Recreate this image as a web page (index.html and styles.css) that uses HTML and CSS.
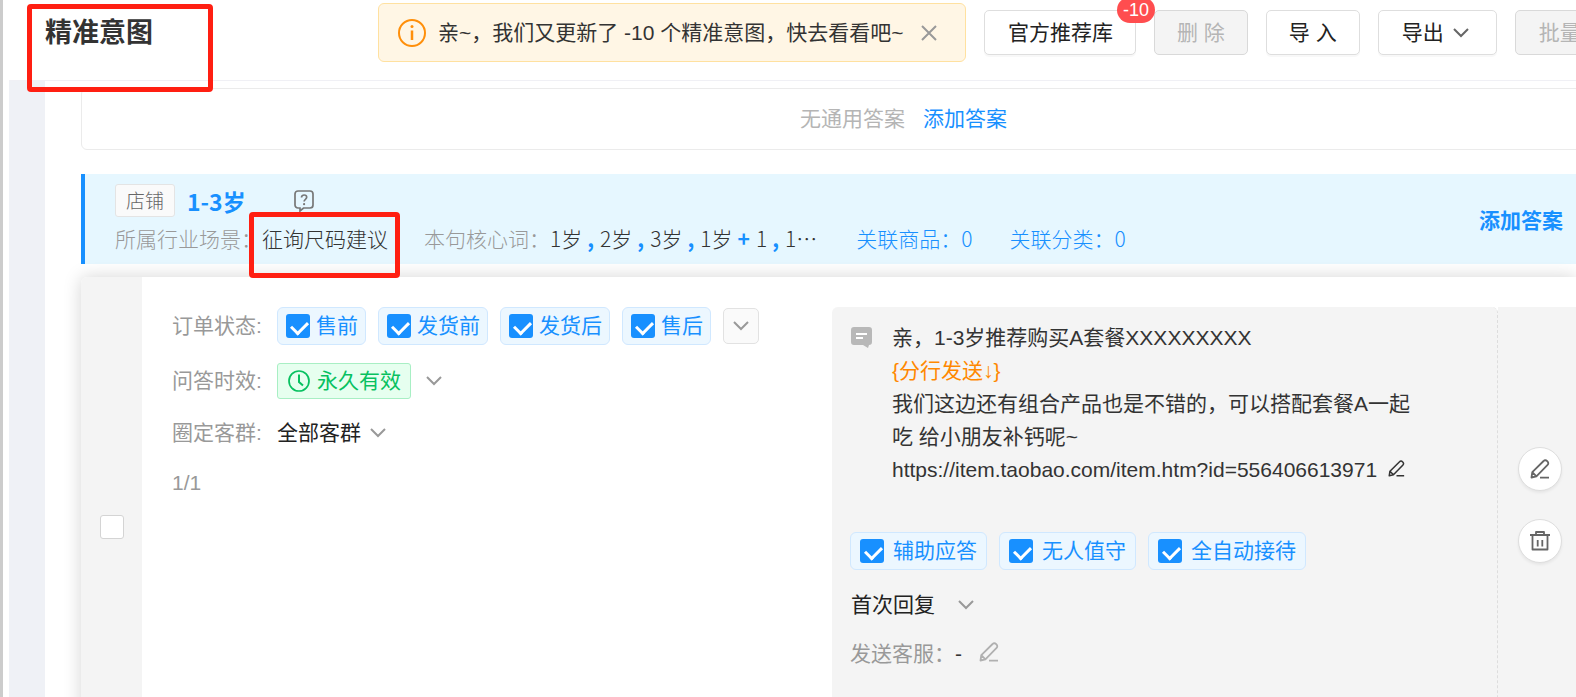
FILE: index.html
```
<!DOCTYPE html>
<html lang="zh-CN">
<head>
<meta charset="utf-8">
<title>精准意图</title>
<link rel="stylesheet" href="styles.css">
</head>
<body>
<svg class="sprite" aria-hidden="true">
  <symbol id="chevron" viewBox="0 0 16 10"><path d="M1 1l7 7 7-7" fill="none" stroke="currentColor" stroke-width="2"/></symbol>
  <symbol id="pencil" viewBox="0 0 20 20"><path d="M1.5 18.5l.8-5.3L13.6 2a2.3 2.3 0 0 1 3.4 0l.6.6a2.3 2.3 0 0 1 0 3.3L6.4 17.4zM2.3 13.2l4.1 4.2M10 18.6h9" fill="none" stroke="currentColor" stroke-width="1.8" stroke-linejoin="round"/></symbol>
</svg>
<div class="app">
  <header class="topbar">
    <h1 class="title">精准意图</h1>
    <div class="notice">
      <svg class="icon-info" viewBox="0 0 28 28"><circle cx="14" cy="14" r="13" fill="none" stroke="currentColor" stroke-width="2"/><path d="M14 11.500v9.500" stroke="currentColor" stroke-width="2.500"/><circle cx="14" cy="7.500" r="1.500" fill="currentColor"/></svg>
      <span>亲~，我们又更新了 -10 个精准意图，快去看看吧~</span>
      <button class="close" aria-label="关闭"><svg viewBox="0 0 16 16"><path d="M1 1l14 14M15 1L1 15" stroke="currentColor" stroke-width="2"/></svg></button>
    </div>
    <div class="actions">
      <button class="btn">官方推荐库<span class="badge">-10</span></button>
      <button class="btn btn-short" disabled>删 除</button>
      <button class="btn btn-short">导 入</button>
      <button class="btn btn-menu">导出<svg class="chevron"><use href="#chevron"/></svg></button>
      <button class="btn" disabled>批量</button>
    </div>
    <div class="mark mark-title"></div>
  </header>
  <main class="content">
    <section class="empty"><span>无通用答案</span><a href="#">添加答案</a></section>
    <section class="intent">
      <div class="intent-info">
        <div class="intent-name">
          <span class="tag">店铺</span><strong>1-3岁</strong>
          <svg class="icon-help" viewBox="0 0 20 22"><path d="M4 1h12a3 3 0 0 1 3 3v11a3 3 0 0 1-3 3H9.500L6 21v-3H4a3 3 0 0 1-3-3V4a3 3 0 0 1 3-3z" fill="none" stroke="currentColor" stroke-width="1.700"/><path d="M7.500 7.500c0-3.400 5.200-3.200 5.200-.2 0 2-2.600 2-2.600 4.200" fill="none" stroke="currentColor" stroke-width="1.700"/><circle cx="10.100" cy="14.200" r="1.100" fill="currentColor"/></svg>
        </div>
        <div class="intent-meta">
          <div class="scene"><span class="muted">所属行业场景：</span><span class="value">征询尺码建议<span class="mark mark-scene"></span></span></div>
          <div class="words"><span class="muted">本句核心词：</span>1岁<b>,</b>2岁<b>,</b>3岁<b>,</b>1岁<b>+</b>1<b>,</b>1<span class="dots">…</span></div>
          <a class="link-goods" href="#">关联商品：0</a>
          <a href="#">关联分类：0</a>
        </div>
      </div>
      <a class="add" href="#">添加答案</a>
    </section>
    <section class="card">
      <div class="select"><input class="box" type="checkbox" aria-label="选择"></div>
      <div class="conditions">
        <div class="row row-status">
          <span class="label">订单状态:</span>
          <div class="chips">
            <label class="chip"><input class="box" type="checkbox" checked>售前</label>
            <label class="chip"><input class="box" type="checkbox" checked>发货前</label>
            <label class="chip"><input class="box" type="checkbox" checked>发货后</label>
            <label class="chip"><input class="box" type="checkbox" checked>售后</label>
            <button class="more" aria-label="更多"><svg class="chevron"><use href="#chevron"/></svg></button>
          </div>
        </div>
        <div class="row">
          <span class="label">问答时效:</span>
          <button class="picker"><span class="valid"><svg viewBox="0 0 22 22"><circle cx="11" cy="11" r="10" fill="none" stroke="currentColor" stroke-width="1.700"/><path d="M11 4.500V12l4 3.500" fill="none" stroke="currentColor" stroke-width="2"/></svg>永久有效</span><svg class="chevron"><use href="#chevron"/></svg></button>
        </div>
        <div class="row row-crowd">
          <span class="label">圈定客群:</span>
          <button class="picker crowd">全部客群<svg class="chevron"><use href="#chevron"/></svg></button>
        </div>
        <div class="count">1/1</div>
      </div>
      <div class="answer">
        <div class="message">
          <svg class="icon-msg" viewBox="0 0 21 21"><path d="M3 0h15a3 3 0 0 1 3 3v12a3 3 0 0 1-3 3l-1 3-5-3H3a3 3 0 0 1-3-3V3a3 3 0 0 1 3-3z" fill="#b8b8b8"/><path d="M5 7h11M5 11h7" stroke="#fff" stroke-width="2"/></svg>
          <p>亲，1-3岁推荐购买A套餐XXXXXXXXX<br><span class="split">{分行发送↓}</span><br>我们这边还有组合产品也是不错的，可以搭配套餐A一起吃 给小朋友补钙呢~<br>https://item.taobao.com/item.htm?id=556406613971<button class="edit" aria-label="编辑"><svg><use href="#pencil"/></svg></button></p>
        </div>
        <div class="chips modes">
          <label class="chip"><input class="box" type="checkbox" checked>辅助应答</label>
          <label class="chip"><input class="box" type="checkbox" checked>无人值守</label>
          <label class="chip"><input class="box" type="checkbox" checked>全自动接待</label>
        </div>
        <button class="picker reply">首次回复<svg class="chevron"><use href="#chevron"/></svg></button>
        <div class="sender"><span class="label">发送客服：</span><span>-</span><button class="edit" aria-label="编辑客服"><svg><use href="#pencil"/></svg></button></div>
      </div>
      <div class="tools">
        <button class="round" aria-label="编辑答案"><svg><use href="#pencil"/></svg></button>
        <button class="round" aria-label="删除答案"><svg viewBox="0 0 20 20"><path d="M0 4h20M6 4V1h8v3M2.500 4v14.500h15V4M7.700 9v6.500M12.300 9v6.500" fill="none" stroke="currentColor" stroke-width="1.800" stroke-linejoin="round"/></svg></button>
      </div>
    </section>
  </main>
</div>
</body>
</html>
```
FILE: styles.css
```
* { box-sizing: border-box; }
body {
  margin: 0;
  color: #333;
  font: 21px/32px "Liberation Sans", "Noto Sans CJK SC", sans-serif;
}
button { padding: 0; border: 0; background: none; color: inherit; font: inherit; cursor: pointer; }
a { color: #1890ff; text-decoration: none; }
svg { display: block; flex: none; }
.sprite { position: absolute; width: 0; height: 0; }
.app { height: 100vh; overflow: hidden; border-left: 3px solid #ccc; padding-left: 6px; }

.topbar {
  position: relative;
  z-index: 1;
  display: flex;
  align-items: flex-start;
  height: 81px;
  padding: 3px 0 0 36px;
  border-bottom: 1px solid #f0f0f5;
  background: #fff;
  white-space: nowrap;
}
.title { flex: none; width: 333px; margin: 0; padding-top: 14px; font-size: 27px; line-height: 32px; font-weight: 700; }
.notice {
  display: flex;
  flex: none;
  align-items: center;
  width: 588px;
  height: 59px;
  padding-left: 19px;
  border: 1px solid #ffe1a0;
  border-radius: 6px;
  background: #fff6e5;
}
.icon-info { width: 28px; height: 28px; margin-right: 12px; color: #ff8f0a; }
.close { margin-left: auto; margin-right: 28px; color: #999; }
.close svg { width: 16px; height: 16px; }
.actions { display: flex; gap: 18px; padding: 7px 0 0 18px; }
.btn {
  position: relative;
  display: flex;
  flex: none;
  align-items: center;
  height: 45px;
  padding: 0 22px 0 23px;
  border: 1px solid #dedede;
  border-radius: 5px;
  background: #fff;
  box-shadow: 0 2px 1px #f8f8f8;
  color: #222;
}
.btn-short { padding: 0 22px; }
.btn-menu { padding-right: 27px; }
.btn:disabled { border-color: #d9d9d9; background: #f4f4f4; box-shadow: none; color: #b5b5b5; }
.btn .chevron { margin-left: 9px; color: #666; }
.badge {
  position: absolute;
  z-index: 1;
  top: -14px;
  right: -20px;
  height: 26px;
  padding: 0 6px;
  border-radius: 13px;
  background: #ff4d4f;
  color: #fff;
  font-size: 18px;
  line-height: 26px;
}
.chevron { width: 16px; height: 10px; color: #999; }

.mark { position: absolute; border: 5px solid #ff1f12; border-radius: 4px; pointer-events: none; }
.mark-title { left: 18px; top: 4px; width: 186px; height: 88px; }
.mark-scene { left: -13px; top: -11px; width: 151px; height: 66px; z-index: 2; }

.content { border-left: 36px solid #eff1f6; padding: 7px 0 0 36px; white-space: nowrap; }
.empty {
  display: flex;
  justify-content: center;
  gap: 18px;
  height: 62px;
  margin-right: -150px;
  padding: 14px 0;
  border: 1px solid #ebebeb;
  border-radius: 6px;
  color: #b5b5b5;
}
.intent {
  display: flex;
  align-items: center;
  justify-content: space-between;
  height: 90px;
  margin-top: 24px;
  padding: 0 13px 0 30px;
  border-left: 4px solid #1890ff;
  background: #e6f7ff;
  font-family: "Noto Sans CJK SC", sans-serif;
  font-weight: 300;
}
.intent-name { display: flex; align-items: center; height: 33px; }
.intent-name strong { margin-left: 12px; color: #1890ff; font-size: 23px; font-weight: 700; }
.tag { height: 33px; padding: 0 10px; border: 1px solid #e4e4e4; border-radius: 3px; background: #fafafa; color: #666; font-size: 19px; line-height: 29px; }
.icon-help { width: 20px; height: 22px; margin-left: 48px; color: #777; }
.intent-meta { display: flex; align-items: flex-end; height: 37px; }
.muted { color: #999; }
.value { position: relative; }
.words { margin-left: 36px; }
.words b { margin: 0 6px 0 5px; color: #1890ff; font-weight: 700; }
.words .dots { font-size: 21px; }
.link-goods { margin: 0 37px 0 39px; }
.add { font-weight: 700; }

.card {
  display: grid;
  grid-template-columns: 61px 1fr 666px 78px;
  min-height: 500px;
  margin-top: 13px;
  border-radius: 6px 0 0 0;
  background: #fff;
  box-shadow: 0 0 18px rgba(0, 0, 0, .17);
}
.select { display: grid; place-items: center; border-radius: 6px 0 0 0; background: #f4f4f4; }
.box {
  appearance: none;
  width: 24px;
  height: 24px;
  margin: 0;
  border: 1px solid #d4d4d4;
  border-radius: 3px;
  background: #fff;
}
.box:checked { border: 0; background: #1890ff; }
.box:checked::before {
  content: "";
  display: block;
  width: 8px;
  height: 13px;
  margin: 4px 8px;
  border: solid #fff;
  border-width: 0 3px 3px 0;
  transform: rotate(45deg);
}
.conditions { display: flex; flex-direction: column; gap: 18px; padding: 30px 0 0 30px; }
.row { display: flex; align-items: center; height: 36px; }
.row-status { height: 38px; }
.row-crowd { height: 32px; }
.label { width: 105px; color: #999; }
.chips { display: flex; gap: 12px; align-items: center; }
.chip {
  display: flex;
  align-items: center;
  gap: 6px;
  height: 38px;
  padding: 0 7px 0 8px;
  border: 1px solid #d0e8ff;
  border-radius: 6px;
  background: #ecf7ff;
  color: #1890ff;
}
.more { display: grid; place-items: center; width: 36px; height: 36px; border: 1px solid #e2e2e2; border-radius: 5px; background: #fafafa; }
.picker { display: flex; align-items: center; gap: 15px; }
.valid { display: flex; align-items: center; gap: 7px; height: 36px; padding: 0 9px 0 10px; border: 1px solid #a8efc4; border-radius: 3px; background: #e6ffef; color: #07c160; }
.valid svg { width: 22px; height: 22px; }
.crowd { gap: 9px; color: #222; }
.count { color: #999; line-height: 32px; }

.answer { margin-top: 30px; padding: 14px 18px; border-radius: 6px 6px 0 0; border-right: 1px dashed #ddd; background: #f4f4f4; white-space: normal; }
.message { display: flex; align-items: flex-start; gap: 20px; }
.icon-msg { width: 21px; height: 21px; margin: 6px 0 0 1px; }
.message p { width: 520px; margin: 0; line-height: 33px; }
.split { color: #ff8800; }
.edit { display: inline-block; }
.edit svg { width: 17px; height: 17px; }
.message .edit { margin-left: 11px; }
.modes { margin-top: 46px; white-space: nowrap; }
.modes .chip { gap: 9px; padding: 0 9px; }
.reply { gap: 23px; margin: 19px 0 17px 1px; color: #222; }
.sender { display: flex; align-items: center; }
.sender .edit { margin: 0 0 4px 17px; color: #b0b0b0; }
.sender .edit svg { width: 20px; height: 20px; }
.tools { display: flex; flex-direction: column; align-items: flex-start; gap: 28px; margin-top: 30px; padding: 140px 0 0 20px; background: #f4f4f4; }
.round { display: grid; place-items: center; width: 44px; height: 44px; border: 1px solid #dedede; border-radius: 50%; background: #fff; box-shadow: 0 2px 3px rgba(0, 0, 0, .06); color: #666; }
.round svg { width: 20px; height: 20px; }
```
